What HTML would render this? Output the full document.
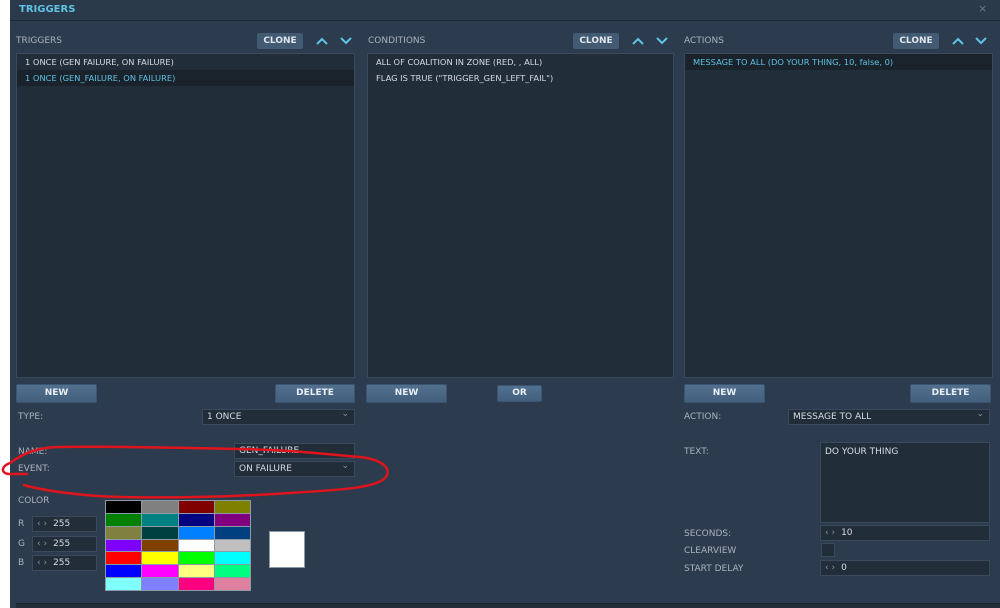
<!DOCTYPE html>
<html><head><meta charset="utf-8"><style>
*{box-sizing:border-box;margin:0;padding:0}
body{width:1000px;height:608px;background:#fff;position:relative;overflow:hidden;font-family:"DejaVu Sans","Liberation Sans",sans-serif;font-size:9px;color:#d0d6dd}
.p{position:absolute;left:10px;top:0;width:990px;height:608px;background:#2c3b4d}
.a{position:absolute}
.title{left:10px;top:0;width:990px;height:21px;border-bottom:1px solid #1f2a37;background:#2b3a4b}
.title span{position:absolute;left:9px;top:4px;font-weight:bold;color:#5fc3e4;font-size:10px}
.lbl{color:#aab3bd;font-size:9px}
.list{background:#222d3a;border:1px solid #3a4a5c}
.row{height:16px;line-height:16px;padding-left:8px;font-size:8.3px;color:#d6dce2;white-space:nowrap}
.sel{background:#1a222c;color:#5fc3e4}
.btn{background:linear-gradient(#52708f,#42607e);border:1px solid #3a5570;border-radius:2px;color:#e8eef3;font-weight:bold;font-size:9px;text-align:center;line-height:17px;height:19px}
.clone{background:#435a73;border-radius:2px;color:#e0e6ec;font-weight:bold;font-size:9px;text-align:center;line-height:16px;height:16px;width:46px}
.inp{background:#222d3a;border:1px solid #3a4a5c;font-size:9px;color:#d6dce2;padding-left:4px;line-height:14px;height:16px}
.dd::after{content:"⌄";position:absolute;right:5px;top:-3px;color:#8a96a2}
.sp{color:#8a96a2;margin-right:6px}
</style></head><body>
<div class="p"></div>
<div class="a title"><span>TRIGGERS</span><span style="left:968px;top:2px;color:#6c7986;font-weight:normal;font-size:11px">×</span></div>

<svg class="a" style="left:0;top:0" width="1000" height="60" fill="none" stroke="#5fc3e4" stroke-width="2">
<path d="M317,44 L322,39 L327,44 M341,38 L346,43 L351,38"/>
<path d="M633,44 L638,39 L643,44 M657,38 L662,43 L667,38"/>
<path d="M953,44 L958,39 L963,44 M976,38 L981,43 L986,38"/>
</svg>

<div class="a lbl" style="left:16px;top:36px">TRIGGERS</div>
<div class="a clone" style="left:257px;top:33px">CLONE</div>
<div class="a lbl" style="left:368px;top:36px">CONDITIONS</div>
<div class="a clone" style="left:573px;top:33px">CLONE</div>
<div class="a lbl" style="left:684px;top:36px">ACTIONS</div>
<div class="a clone" style="left:893px;top:33px">CLONE</div>

<div class="a list" style="left:16px;top:53px;width:339px;height:325px">
<div class="row">1 ONCE (GEN FAILURE, ON FAILURE)</div>
<div class="row sel">1 ONCE (GEN_FAILURE, ON FAILURE)</div></div>
<div class="a list" style="left:367px;top:53px;width:307px;height:325px">
<div class="row">ALL OF COALITION IN ZONE (RED, , ALL)</div>
<div class="row">FLAG IS TRUE ("TRIGGER_GEN_LEFT_FAIL")</div></div>
<div class="a list" style="left:684px;top:53px;width:309px;height:325px">
<div class="row sel">MESSAGE TO ALL (DO YOUR THING, 10, false, 0)</div></div>

<div class="a btn" style="left:16px;top:384px;width:81px">NEW</div>
<div class="a btn" style="left:275px;top:384px;width:80px">DELETE</div>
<div class="a btn" style="left:366px;top:384px;width:81px">NEW</div>
<div class="a btn" style="left:497px;top:385px;width:45px;height:17px;line-height:15px">OR</div>
<div class="a btn" style="left:684px;top:384px;width:81px">NEW</div>
<div class="a btn" style="left:910px;top:384px;width:81px">DELETE</div>

<div class="a lbl" style="left:18px;top:412px">TYPE:</div>
<div class="a inp dd" style="left:202px;top:409px;width:153px">1 ONCE</div>
<div class="a lbl" style="left:18px;top:447px">NAME:</div>
<div class="a inp" style="left:234px;top:443px;width:121px">GEN_FAILURE</div>
<div class="a lbl" style="left:18px;top:464px">EVENT:</div>
<div class="a inp dd" style="left:234px;top:461px;width:121px">ON FAILURE</div>
<div class="a lbl" style="left:18px;top:496px">COLOR</div>
<div class="a lbl" style="left:18px;top:519px">R</div><div class="a inp" style="left:32px;top:516px;width:65px"><span class="sp">‹ ›</span>255</div>
<div class="a lbl" style="left:18px;top:539px">G</div><div class="a inp" style="left:32px;top:536px;width:65px"><span class="sp">‹ ›</span>255</div>
<div class="a lbl" style="left:18px;top:558px">B</div><div class="a inp" style="left:32px;top:555px;width:65px"><span class="sp">‹ ›</span>255</div>
<div class="a" style="left:105px;top:500px;width:146px;height:91px;background:#8a9aa6;display:grid;grid-template-columns:repeat(4,1fr);grid-template-rows:repeat(7,1fr);gap:1px;padding:1px">
<div style="background:#000"></div><div style="background:#808080"></div><div style="background:#800000"></div><div style="background:#808000"></div>
<div style="background:#008000"></div><div style="background:#008080"></div><div style="background:#000080"></div><div style="background:#800080"></div>
<div style="background:#808040"></div><div style="background:#004040"></div><div style="background:#0080ff"></div><div style="background:#004080"></div>
<div style="background:#8000ff"></div><div style="background:#804000"></div><div style="background:#fff"></div><div style="background:#c0c0c0"></div>
<div style="background:#f00"></div><div style="background:#ff0"></div><div style="background:#0f0"></div><div style="background:#0ff"></div>
<div style="background:#00f"></div><div style="background:#f0f"></div><div style="background:#ffff80"></div><div style="background:#00ff80"></div>
<div style="background:#80ffff"></div><div style="background:#8080ff"></div><div style="background:#ff0080"></div><div style="background:#e080a0"></div></div>
<div class="a" style="left:269px;top:531px;width:36px;height:37px;background:#fff;border:1px solid #8a9aa6"></div>

<div class="a lbl" style="left:684px;top:412px">ACTION:</div>
<div class="a inp dd" style="left:788px;top:409px;width:202px">MESSAGE TO ALL</div>
<div class="a lbl" style="left:684px;top:447px">TEXT:</div>
<div class="a inp" style="left:820px;top:442px;width:170px;height:81px;padding-top:2px">DO YOUR THING</div>
<div class="a lbl" style="left:684px;top:529px">SECONDS:</div>
<div class="a inp" style="left:820px;top:525px;width:170px"><span class="sp">‹ ›</span>10</div>
<div class="a lbl" style="left:684px;top:546px">CLEARVIEW</div>
<div class="a" style="left:821px;top:543px;width:14px;height:14px;background:#222d3a;border:1px solid #3a4a5c"></div>
<div class="a lbl" style="left:684px;top:564px">START DELAY</div>
<div class="a inp" style="left:820px;top:560px;width:170px"><span class="sp">‹ ›</span>0</div>
<div class="a" style="left:16px;top:603px;width:984px;height:5px;background:#222d3a;border-top:1px solid #1a222c"></div>

<svg class="a" style="left:0;top:0" width="1000" height="608"><path d="M27,474 L8,474 C0,472 2,466 10,463 C25,452 40,447 60,447 C120,446 180,448 240,449 C300,450 330,455 360,457 C385,460 392,470 385,478 C375,488 340,490 290,493 C230,497 170,498 120,497 C80,496 40,490 24,485" fill="none" stroke="#e0141c" stroke-width="2.5" stroke-linecap="round"/></svg>
</body></html>
